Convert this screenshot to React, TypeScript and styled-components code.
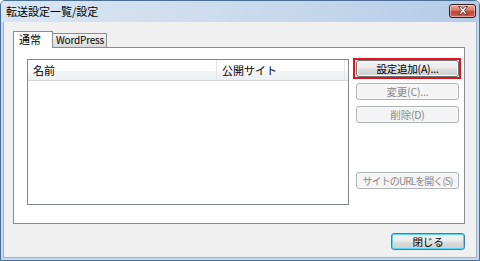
import styled, { createGlobalStyle } from 'styled-components';

const GlobalStyle = createGlobalStyle`
  html, body {
    margin: 0;
    padding: 0;
  }
  body {
    width: 480px;
    height: 261px;
    overflow: hidden;
    font-family: "Noto Sans CJK JP", "Liberation Sans", sans-serif;
    font-size: 11px;
    color: #000;
  }
`;

const Window = styled.div`
  box-sizing: border-box;
  width: 480px;
  height: 261px;
  border: 1px solid #4b6f97;
  border-radius: 5px 5px 0 0;
  background: #c3d7ed;
  display: flex;
  flex-direction: column;
`;

const TitleBar = styled.div`
  height: 21px;
  display: flex;
  align-items: center;
  justify-content: space-between;
  padding: 0 3px 0 5px;
  background: linear-gradient(90deg, #d9e5f2 0%, #cddcee 45%, #b4cce7 100%);
  border-radius: 4px 4px 0 0;
`;

const Title = styled.span`
  font-size: 11px;
  line-height: 1;
  color: #000;
`;

const CloseButton = styled.div`
  box-sizing: border-box;
  width: 27px;
  height: 14px;
  margin-top: -2px;
  border: 1px solid #3d1d1b;
  border-radius: 3px;
  background: linear-gradient(180deg, #e8a898 0%, #d77a66 45%, #c2442f 55%, #d0614e 100%);
  box-shadow: inset 0 0 0 1px rgba(255, 255, 255, 0.45);
  display: flex;
  align-items: center;
  justify-content: center;
`;

const Content = styled.div`
  flex: 1;
  margin: 0 2px 2px 2px;
  background: #f0f0f0;
  border: 1px solid #9fb3ca;
  border-top: none;
  display: flex;
  flex-direction: column;
  padding: 9px 11px 0 9px;
`;

const TabStrip = styled.div`
  display: flex;
  align-items: flex-end;
  height: 16px;
`;

const Tab = styled.div<{ $active?: boolean; $width: number }>`
  box-sizing: border-box;
  position: relative;
  width: ${p => p.$width}px;
  height: ${p => (p.$active ? 17 : 14)}px;
  margin-bottom: ${p => (p.$active ? -1 : 0)}px;
  margin-left: ${p => (p.$active ? 0 : -1)}px;
  z-index: ${p => (p.$active ? 2 : 1)};
  border: 1px solid #898c95;
  border-bottom: none;
  background: ${p => (p.$active ? '#ffffff' : 'linear-gradient(180deg, #f3f3f3 0%, #e6e6e6 50%, #dadada 100%)')};
  padding-left: ${p => (p.$active ? 5 : 3)}px;
  font-size: ${p => (p.$active ? 11 : 10)}px;
  line-height: ${p => (p.$active ? 15 : 12)}px;
  letter-spacing: ${p => (p.$active ? 0 : -0.2)}px;
  white-space: nowrap;
`;

const Panel = styled.div`
  box-sizing: border-box;
  width: 452px;
  height: 177px;
  border: 1px solid #898c95;
  background: #ffffff;
  display: flex;
  padding: 11px 5px 0 13px;
  gap: 7px;
`;

const ListBox = styled.div`
  box-sizing: border-box;
  width: 322px;
  height: 146px;
  border: 1px solid #828790;
  background: #ffffff;
`;

const Header = styled.div`
  display: flex;
  height: 20px;
  border-bottom: 1px solid #d5d5d5;
  background: linear-gradient(180deg, #ffffff 0%, #ffffff 55%, #f3f4f6 56%, #eef0f3 100%);
`;

const HeaderCell = styled.div<{ $width: number }>`
  box-sizing: border-box;
  width: ${p => p.$width}px;
  padding-left: 5px;
  display: flex;
  align-items: center;
  border-right: 1px solid #e3e5e8;
`;

const ButtonColumn = styled.div`
  display: flex;
  flex-direction: column;
  gap: 6px;
  padding-top: 1px;
`;

const Button = styled.div<{ $disabled?: boolean; $width?: number; $default?: boolean; $tight?: boolean }>`
  box-sizing: border-box;
  position: relative;
  width: ${p => p.$width ?? 103}px;
  height: 17px;
  border: 1px solid ${p => (p.$disabled ? '#adb2b5' : p.$default ? '#3c7fb1' : '#707070')};
  border-radius: 3px;
  background: ${p =>
    p.$disabled ? '#f4f4f4' : 'linear-gradient(180deg, #f2f2f2 0%, #ebebeb 48%, #dddddd 52%, #cfcfcf 100%)'};
  box-shadow: inset 0 0 0 1px ${p => (p.$default ? '#5cd3f7' : p.$disabled ? '#f9f9f9' : '#fbfbfb')};
  color: ${p => (p.$disabled ? '#8a8a8a' : '#000')};
  display: flex;
  align-items: center;
  justify-content: center;
  font-size: ${p => (p.$tight ? 10 : 10.5)}px;
  letter-spacing: ${p => (p.$tight ? -0.9 : -0.2)}px;
  white-space: nowrap;
  overflow: hidden;
`;

const Highlight = styled.div`
  position: absolute;
  top: -2px;
  left: -3px;
  right: -2px;
  bottom: -2px;
  border: 2px solid #e0141e;
  pointer-events: none;
`;

const HighlightWrap = styled.div`
  position: relative;
`;

const Spacer = styled.div`
  height: 37px;
`;

const Footer = styled.div`
  display: flex;
  justify-content: flex-end;
  margin-top: 9px;
`;

export default function App() {
  return (
    <>
      <GlobalStyle />
      <Window>
        <TitleBar>
          <Title>転送設定一覧/設定</Title>
          <CloseButton>
            <svg width="12" height="9" viewBox="0 0 12 9">
              <path
                d="M1.5 0.5 L4 0.5 L6 2.8 L8 0.5 L10.5 0.5 L7.4 4.5 L10.5 8.5 L8 8.5 L6 6.2 L4 8.5 L1.5 8.5 L4.6 4.5 Z"
                fill="#ffffff"
                stroke="#4a2420"
                strokeWidth="0.8"
                strokeLinejoin="round"
              />
            </svg>
          </CloseButton>
        </TitleBar>
        <Content>
          <TabStrip>
            <Tab $active $width={40}>
              通常
            </Tab>
            <Tab $width={55}>WordPress</Tab>
          </TabStrip>
          <Panel>
            <ListBox>
              <Header>
                <HeaderCell $width={189}>名前</HeaderCell>
                <HeaderCell $width={128}>公開サイト</HeaderCell>
              </Header>
            </ListBox>
            <ButtonColumn>
              <HighlightWrap>
                <Button>設定追加(A)...</Button>
                <Highlight />
              </HighlightWrap>
              <Button $disabled>変更(C)...</Button>
              <Button $disabled>削除(D)</Button>
              <Spacer />
              <Button $disabled $tight>
                サイトのURLを開く(S)
              </Button>
            </ButtonColumn>
          </Panel>
          <Footer>
            <Button $default $width={74}>
              閉じる
            </Button>
          </Footer>
        </Content>
      </Window>
    </>
  );
}
